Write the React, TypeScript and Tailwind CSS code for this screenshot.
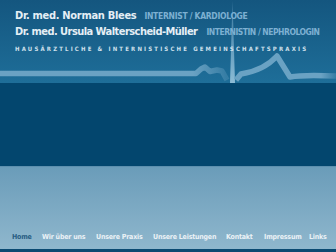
import React from "react";

const F = '"DejaVu Sans Condensed", "DejaVu Sans", sans-serif';

const nav: [string, string][] = [
  ["Home", "w-[30px]"],
  ["Wir über uns", "w-[54px]"],
  ["Unsere Praxis", "w-[57px]"],
  ["Unsere Leistungen", "w-[73px]"],
  ["Kontakt", "w-[38px]"],
  ["Impressum", "w-[45px]"],
  ["Links", "w-[20px]"],
];

export default function App() {
  return (
    <div className="w-[336px] h-[252px] overflow-hidden flex flex-col whitespace-nowrap" style={{ fontFamily: F }}>
      <div className="relative h-[83px] bg-gradient-to-b from-[#14567f] to-[#1e6e99] shrink-0">
        <svg className="absolute inset-0" width="336" height="83" viewBox="0 0 336 83">
          <defs>
            <linearGradient id="fade" x1="0" x2="1" y1="0" y2="0">
              <stop offset="0" stopColor="#6aa2c3" />
              <stop offset="0.85" stopColor="#6aa2c3" />
              <stop offset="1" stopColor="#6aa2c3" stopOpacity="0.3" />
            </linearGradient>
            <linearGradient id="spike" x1="0" x2="0" y1="0" y2="1">
              <stop offset="0" stopColor="#5f98bb" stopOpacity="0.5" />
              <stop offset="1" stopColor="#8cbcd6" />
            </linearGradient>
          </defs>
          <path
            d="M0 73.5 L196 73.5 L201 69 L205 67 L210 71.5 L217 70 L222 71 L227 80"
            fill="none"
            stroke="url(#fade)"
            strokeWidth="5.5"
            strokeLinejoin="round"
          />
          <path d="M230 83 L232.5 0 L235 83 Z" fill="url(#spike)" />
          <path
            d="M236 80 L241 74 C254 72 268 66 277 56 L290 77 C300 75 315 75 336 76"
            fill="none"
            stroke="url(#fade)"
            strokeWidth="5.5"
            strokeLinejoin="round"
          />
        </svg>
        <div className="relative pl-[15px] pt-[8px] flex flex-col">
          <div className="flex items-baseline leading-[15px]">
            <span className="text-[11px] font-bold text-[#e4eef5] tracking-[-0.3px]">Dr. med. Norman Blees</span>
            <span className="ml-[8px] text-[8.5px] font-bold text-[#7db0d2] tracking-[-0.3px]">INTERNIST / KARDIOLOGE</span>
          </div>
          <div className="flex items-baseline leading-[15px]">
            <span className="text-[11px] font-bold text-[#e4eef5] tracking-[-0.55px]">Dr. med. Ursula Walterscheid-Müller</span>
            <span className="ml-[9px] text-[8.5px] font-bold text-[#7db0d2] tracking-[-0.5px]">INTERNISTIN / NEPHROLOGIN</span>
          </div>
          <div className="mt-[5px] text-[6px] font-bold text-[#cfe0ec] tracking-[2.17px] leading-[8px]">
            HAUSÄRZTLICHE &amp; INTERNISTISCHE GEMEINSCHAFTSPRAXIS
          </div>
        </div>
      </div>
      <div className="h-[83px] bg-[#03466e] shrink-0" />
      <div className="h-[1px] bg-[#5c8fae] shrink-0" />
      <div className="h-[82px] bg-gradient-to-b from-[#6a9cb9] to-[#8fb7cd] shrink-0 flex items-end pb-[8px] pl-[12px]">
        <div className="flex text-[7px] font-bold leading-none tracking-[-0.2px]">
          {nav.map(([n, w], i) => (
            <span key={n} className={w + " " + (i === 0 ? "text-[#285d83]" : "text-[#eaf1f6]")}>{n}</span>
          ))}
        </div>
      </div>
      <div className="flex-1 bg-[#0b4a72]" />
    </div>
  );
}
